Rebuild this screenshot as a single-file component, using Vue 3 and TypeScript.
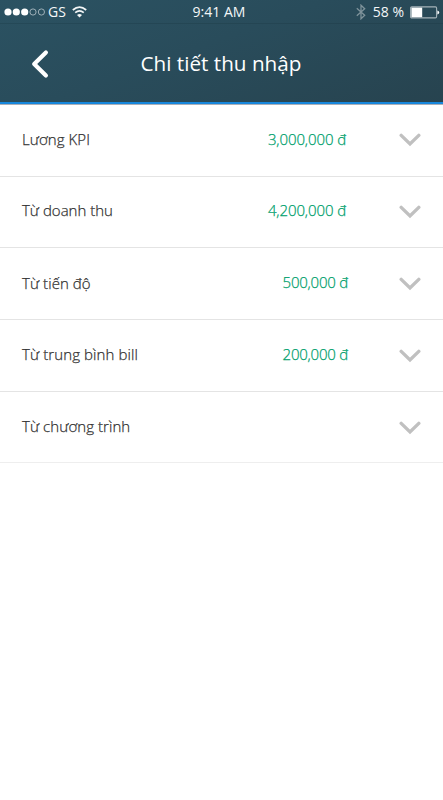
<script setup lang="ts">
interface IncomeRow {
  id: string
  label: string
  amount: string
}

const rows: IncomeRow[] = [
  { id: 'kpi', label: 'Lương KPI', amount: '3,000,000 đ' },
  { id: 'revenue', label: 'Từ doanh thu', amount: '4,200,000 đ' },
  { id: 'progress', label: 'Từ tiến độ', amount: '500,000 đ' },
  { id: 'bill', label: 'Từ trung bình bill', amount: '200,000 đ' },
  { id: 'program', label: 'Từ chương trình', amount: '' },
]
</script>

<template>
  <div class="screen">
    <header class="header">
      <div class="status">
        <div class="side">
          <svg class="signal" width="42" height="10" viewBox="0 0 42 10">
            <circle cx="4" cy="5" r="3.6" fill="#fff" />
            <circle cx="12.3" cy="5" r="3.6" fill="#fff" />
            <circle cx="20.7" cy="5" r="3.6" fill="#fff" />
            <circle cx="29" cy="5" r="3.1" fill="none" stroke="#a9b9c1" stroke-width=".9" />
            <circle cx="37.4" cy="5" r="3.1" fill="none" stroke="#a9b9c1" stroke-width=".9" />
          </svg>
          <span class="carrier">GS</span>
          <svg class="wifi" width="15" height="12" viewBox="0 0 15 12" fill="none" stroke="#f2f5f6">
            <path d="M.8 4Q7.5-1.8 14.2 4" stroke-width="1.7" />
            <path d="M3.2 6.7Q7.5 3 11.8 6.7" stroke-width="1.6" />
            <path d="M5 9Q7.5 7 10 9L7.5 11.5Z" fill="#f2f5f6" stroke="none" />
          </svg>
        </div>
        <span class="time">9:41 AM</span>
        <div class="side right">
          <svg class="bluetooth" width="10" height="16" viewBox="0 0 10 16" fill="none" stroke="#7f939b" stroke-width="1.3">
            <path d="M.8 4.3 8.7 11.3 5 14.8V1.2L8.7 4.7.8 11.7" />
          </svg>
          <span class="percent">58 %</span>
          <svg class="battery" width="30" height="13" viewBox="0 0 30 13">
            <rect x=".6" y=".9" width="26" height="11" rx="1.2" fill="none" stroke="#a5b3b9" stroke-width="1.1" />
            <rect x="1.4" y="1.6" width="10.8" height="9.6" fill="#fff" />
            <path d="M27.4 4.6Q29.2 5 29.2 6.5T27.4 8.4Z" fill="#fff" />
          </svg>
        </div>
      </div>
      <div class="bar">
        <button class="back" aria-label="Back">
          <svg width="18" height="30" viewBox="0 0 18 30" fill="none" stroke="#fff" stroke-width="4.2" stroke-linecap="round" stroke-linejoin="round">
            <path d="M14.9 3.5 3.2 15 14.9 26.5" />
          </svg>
        </button>
        <h1 class="title">Chi tiết thu nhập</h1>
      </div>
    </header>
    <main class="list">
      <div v-for="row in rows" :key="row.id" class="row" :class="row.id">
        <span class="label">{{ row.label }}</span>
        <span class="amount">{{ row.amount }}</span>
        <svg class="chevron" width="22" height="14" viewBox="0 0 22 14" fill="none" stroke="#c0c0c0" stroke-width="3.4" stroke-linejoin="miter">
          <path d="M2.2 2.4 11 10.9 19.8 2.4" stroke-linecap="round" />
        </svg>
      </div>
    </main>
  </div>
</template>

<style>
body {
  background: #fff;
}
</style>

<style scoped>
.screen {
  width: 100%;
  height: 800px;
  background: #fff;
  font-family: "Open Sans", "Noto Sans", sans-serif;
}
.header {
  box-sizing: border-box;
  height: 104px;
  background: linear-gradient(160deg, #2b5262 0%, #294c5b 45%, #27434f 100%) border-box;
  border-bottom: 2px solid #1787dc;
  box-shadow: 0 1px 0 #a9afb8;
}
.status {
  box-sizing: border-box;
  height: 24px;
  display: grid;
  grid-template-columns: 1fr auto 1fr;
  align-items: center;
  padding: 0 4px;
  color: #f4f7f8;
  font-size: 14px;
  line-height: 24px;
  border-bottom: 1px solid rgba(20, 45, 55, 0.22);
}
.side {
  display: flex;
  align-items: center;
}
.right {
  justify-content: flex-end;
  margin-right: -1px;
}
.time {
  padding-right: 5px;
}
.carrier {
  margin-left: 2px;
}
.wifi {
  margin-left: 6px;
}
.percent {
  margin: 0 6px 0 7px;
}
.bar {
  height: 79px;
  display: grid;
  grid-template-columns: 60px 1fr 60px;
  align-items: center;
}
.back {
  display: flex;
  padding: 1px 0 0 31px;
  border: 0;
  background: none;
}
.title {
  margin: 0;
  padding: 0 1px 2px 0;
  color: #fff;
  font-size: 20.7px;
  font-weight: 400;
  text-align: center;
}
.list {
  padding-top: 1px;
}
.row {
  box-sizing: border-box;
  height: 71.7px;
  display: flex;
  align-items: center;
  padding: 0 22px;
  border-bottom: 1px solid #e4e4e4;
  font-size: 15px;
  font-weight: 300;
}
.label,
.amount {
  padding-bottom: 2px;
  -webkit-text-stroke: 0.25px currentColor;
}
.label {
  flex: 1;
  color: #333;
  letter-spacing: 0.06px;
}
.amount {
  color: #00a06c;
  margin-right: 1px;
}
.kpi .amount,
.revenue .amount {
  letter-spacing: -0.1px;
}
.revenue .label {
  letter-spacing: 0;
}
.revenue .label,
.revenue .amount,
.progress .amount {
  padding-bottom: 4px;
}
.progress .amount,
.bill .amount {
  letter-spacing: -0.22px;
  margin-right: -1px;
}
.bill .label {
  letter-spacing: 0.1px;
}
.program {
  border-bottom-color: #eee;
}
.chevron {
  margin-left: 52px;
}
.bill .chevron,
.program .chevron {
  margin-top: 1px;
}
</style>
